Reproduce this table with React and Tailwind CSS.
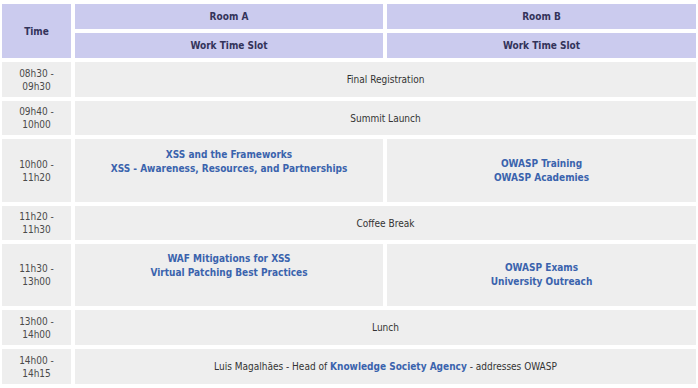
const rows = [
  { time: ['08h30 -', '09h30'], h: 'h-[35px]', all: 'Final Registration' },
  { time: ['09h40 -', '10h00'], h: 'h-[34px]', all: 'Summit Launch' },
  {
    time: ['10h00 -', '11h20'],
    h: 'h-[63px]',
    a: ['XSS and the Frameworks', 'XSS - Awareness, Resources, and Partnerships'],
    b: ['OWASP Training', 'OWASP Academies'],
  },
  { time: ['11h20 -', '11h30'], h: 'h-[34px]', all: 'Coffee Break' },
  {
    time: ['11h30 -', '13h00'],
    h: 'h-[62px]',
    a: ['WAF Mitigations for XSS', 'Virtual Patching Best Practices'],
    b: ['OWASP Exams', 'University Outreach'],
  },
  { time: ['13h00 -', '14h00'], h: 'h-[35px]', all: 'Lunch' },
  {
    time: ['14h00 -', '14h15'],
    h: 'h-[35px]',
    all: (
      <span>
        Luis Magalhães - Head of <a className="font-bold text-[#3a63ad]">Knowledge Society Agency</a> - addresses OWASP
      </span>
    ),
  },
];

function Links({ items, className }) {
  return (
    <div className={`flex flex-col items-center justify-center font-bold text-[#3a63ad] leading-[14px] ${className}`}>
      {items.map((t) => (
        <a key={t}>{t}</a>
      ))}
    </div>
  );
}

export default function App() {
  return (
    <div className="w-[698px] h-[388px] bg-white pt-[4px] pl-[2px] text-[10px] text-[#333] overflow-hidden" style={{ fontFamily: '"DejaVu Sans Condensed", "DejaVu Sans", Verdana, sans-serif' }}>
      <div className="grid grid-cols-[69px_308px_309px] gap-[4px]">
        <div className="row-span-2 bg-[#cbcbee] flex items-center justify-center font-bold text-[#33335a]">Time</div>
        <div className="h-[25px] bg-[#cbcbee] flex items-center justify-center font-bold text-[#33335a]">Room A</div>
        <div className="h-[25px] bg-[#cbcbee] flex items-center justify-center font-bold text-[#33335a]">Room B</div>
        <div className="h-[25px] bg-[#cbcbee] flex items-center justify-center font-bold text-[#33335a]">Work Time Slot</div>
        <div className="h-[25px] bg-[#cbcbee] flex items-center justify-center font-bold text-[#33335a]">Work Time Slot</div>

        {rows.map((r) => (
          <div key={r.time[0]} className="contents">
            <div className={`${r.h} bg-[#eeeeee] flex flex-col items-center justify-center text-[#4a4a4a] leading-[13px]`}>
              <span>{r.time[0]}</span>
              <span>{r.time[1]}</span>
            </div>
            {r.all ? (
              <div className={`${r.h} col-span-2 bg-[#eeeeee] flex items-center justify-center`}>{r.all}</div>
            ) : (
              <>
                <Links items={r.a} className={`${r.h} bg-[#eeeeee] pb-[18px]`} />
                <Links items={r.b} className={`${r.h} bg-[#eeeeee]`} />
              </>
            )}
          </div>
        ))}
      </div>
    </div>
  );
}
